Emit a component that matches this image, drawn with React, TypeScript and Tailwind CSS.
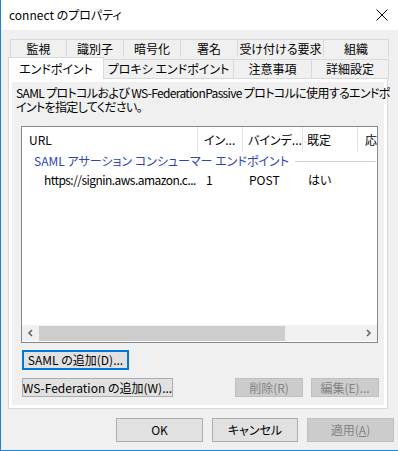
const font = {
  fontFamily: '"Noto Sans CJK JP", "Noto Sans", sans-serif',
  fontFeatureSettings: '"palt"',
};

const topTabs = [
  { label: "監視", w: "w-[57px]" },
  { label: "識別子", w: "w-[57px]" },
  { label: "暗号化", w: "w-[57px]" },
  { label: "署名", w: "w-[57px]" },
  { label: "受け付ける要求", w: "w-[86px]" },
  { label: "組織", w: "w-[65px]" },
];

const lowerTabs = [
  { label: "プロキシ エンドポイント", w: "w-[130px]" },
  { label: "注意事項", w: "w-[78px]" },
  { label: "詳細設定", w: "w-[77px]" },
];

const columns = [
  { label: "URL", w: "w-[176px]", pl: "pl-[7px]" },
  { label: "イン...", w: "w-[45px]", pl: "pl-[6px]" },
  { label: "バインデ...", w: "w-[60px]", pl: "pl-[5px]" },
  { label: "既定", w: "w-[55px]", pl: "pl-[4px]" },
  { label: "応", w: "w-[20px]", pl: "pl-[7px]" },
];

function Btn({
  children,
  className,
  disabled,
  focused,
}: {
  children: React.ReactNode;
  className: string;
  disabled?: boolean;
  focused?: boolean;
}) {
  const tone = disabled
    ? "bg-[#cccccc] border border-[#bfbfbf] text-[#838383]"
    : focused
      ? "bg-[#e1e1e1] border-2 border-[#0078d7] text-black"
      : "bg-[#e1e1e1] border border-[#adadad] text-black";
  return (
    <div
      className={`flex items-center justify-center text-[12px] leading-none whitespace-nowrap ${tone} ${className}`}
    >
      {children}
    </div>
  );
}

export default function App() {
  return (
    <div
      className="w-[398px] h-[451px] bg-[#f0f0f0] border-l border-b border-[#1883d7] flex flex-col overflow-hidden text-black"
      style={font}
    >
      {/* Title bar */}
      <div className="h-[30px] bg-white flex items-center justify-between pl-[8px] pr-[9px] shrink-0">
        <span className="text-[12px] leading-none">connect のプロパティ</span>
        <svg width="12" height="12" viewBox="0 0 12 12" className="mr-[1px]">
          <path d="M0.5 0.5 L11.5 11.5 M11.5 0.5 L0.5 11.5" stroke="#000" strokeWidth="1" />
        </svg>
      </div>

      <div className="pl-[7px] pt-[9px] flex flex-col">
        {/* Tab rows */}
        <div className="flex pl-[2px] h-[18px]">
          {topTabs.map((t, i) => (
            <div
              key={t.label}
              className={`${t.w} h-[18px] border-t border-r border-[#d9d9d9] ${i === 0 ? "border-l" : ""} bg-[#f0f0f0] flex items-center justify-center text-[12px] leading-none whitespace-nowrap`}
            >
              {t.label}
            </div>
          ))}
        </div>
        <div className="flex h-[22px] relative z-10 -mb-px">
          <div className="w-[96px] h-[22px] bg-white border-l border-t border-r border-[#d9d9d9] flex items-center justify-center text-[12px] leading-none">
            エンドポイント
          </div>
          {lowerTabs.map((t) => (
            <div
              key={t.label}
              className={`${t.w} h-[20px] mt-[2px] border-t border-r border-b border-[#d9d9d9] bg-[#f0f0f0] flex items-center justify-center text-[12px] leading-none whitespace-nowrap`}
            >
              {t.label}
            </div>
          ))}
        </div>

        {/* Panel */}
        <div className="w-[380px] h-[331px] border border-[#d9d9d9] bg-white p-[3px]">
          <div className="h-full bg-[#f0f0f0] flex flex-col">
            <p className="pl-[4px] pt-[4px] text-[12px] leading-[14px] whitespace-nowrap tracking-[-0.65px]">
              SAML プロトコルおよび WS-FederationPassive プロトコルに使用するエンドポ
              <br />
              イントを指定してください。
            </p>

            {/* List */}
            <div className="ml-[9px] mt-[12px] w-[357px] h-[217px] border border-[#828790] bg-white flex flex-col">
              <div className="flex h-[25px] shrink-0">
                {columns.map((c, i) => (
                  <div
                    key={c.label}
                    className={`${c.w} ${c.pl} shrink-0 h-full flex items-center text-[12px] leading-none whitespace-nowrap overflow-hidden ${i < columns.length - 1 ? "border-r border-[#e5e5e5]" : ""}`}
                  >
                    {c.label}
                  </div>
                ))}
              </div>
              <div className="flex items-center h-[18px] pl-[12px] pr-[1px]">
                <span className="text-[12px] leading-none text-[#2f44b5] whitespace-nowrap">
                  SAML アサーション コンシューマー エンドポイント
                </span>
                <div className="flex-1 h-px bg-[#c8d2e4] ml-[6px]" />
              </div>
              <div className="flex items-center h-[20px] text-[12px] leading-none">
                <div className="w-[177px] shrink-0 pl-[22px] pr-[4px] whitespace-nowrap tracking-[-0.55px]">
                  https://signin.aws.amazon.c...
                </div>
                <div className="w-[45px] shrink-0 pl-[7px]">1</div>
                <div className="w-[60px] shrink-0 pl-[5px]">POST</div>
                <div className="w-[55px] shrink-0 pl-[4px]">はい</div>
              </div>
              <div className="flex-1" />
              {/* Horizontal scrollbar */}
              <div className="h-[16px] mb-[1px] bg-[#f0f0f0] flex items-center">
                <svg width="17" height="16" viewBox="0 0 17 16">
                  <path d="M10 5 L7 8 L10 11" stroke="#606060" strokeWidth="1.5" fill="none" />
                </svg>
                <div className="w-[246px] h-[15px] bg-[#cdcdcd]" />
                <div className="flex-1" />
                <svg width="17" height="16" viewBox="0 0 17 16">
                  <path d="M7 5 L10 8 L7 11" stroke="#606060" strokeWidth="1.5" fill="none" />
                </svg>
              </div>
            </div>

            {/* Action buttons */}
            <div className="ml-[10px] mt-[7px]">
              <Btn focused className="w-[107px] h-[20px]">
                SAML の追加(D)...
              </Btn>
            </div>
            <div className="flex ml-[10px] mt-[8px] items-center">
              <Btn className="w-[151px] h-[19px] shrink-0">WS-Federation の追加(W)...</Btn>
              <Btn disabled className="w-[68px] h-[19px] ml-[62px] shrink-0">
                削除(R)
              </Btn>
              <Btn disabled className="w-[68px] h-[19px] ml-[8px] shrink-0">
                編集(E)...
              </Btn>
            </div>
          </div>
        </div>

        {/* Dialog buttons */}
        <div className="flex mt-[9px] pl-[108px] gap-[9px]">
          <Btn className="w-[87px] h-[24px]">OK</Btn>
          <Btn className="w-[86px] h-[24px]">キャンセル</Btn>
          <Btn disabled className="w-[87px] h-[24px]">
            <span>
              適用(<span className="underline">A</span>)
            </span>
          </Btn>
        </div>
      </div>
    </div>
  );
}
